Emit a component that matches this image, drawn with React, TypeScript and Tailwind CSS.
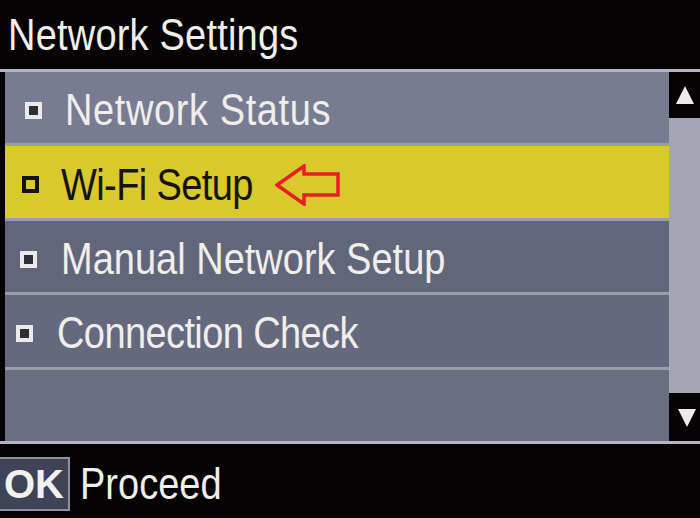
const ROWS: { label: string; bg: string; pad: string; gap: string; track: string; active?: boolean }[] = [
  { label: "Network Status", bg: "bg-[#787c92]", pad: "pl-[20px]", gap: "gap-[23px]", track: "tracking-[0.6px]" },
  { label: "Wi-Fi Setup", bg: "bg-[#d9ca2b]", pad: "pl-[17px]", gap: "gap-[22px]", track: "tracking-[-0.6px]", active: true },
  { label: "Manual Network Setup", bg: "bg-[#62667b]", pad: "pl-[15px]", gap: "gap-[24px]", track: "tracking-[0px]" },
  { label: "Connection Check", bg: "bg-[#65697e]", pad: "pl-[11px]", gap: "gap-[24px]", track: "tracking-[-0.6px]" },
  { label: "", bg: "bg-[#6a6e83]", pad: "pl-[11px]", gap: "gap-[24px]", track: "tracking-[0px]" },
];

function Bullet({ active }: { active?: boolean }) {
  return (
    <div
      className={
        active
          ? "h-[17px] w-[17px] shrink-0 border-[4px] border-[#141414] bg-[#d9ca2b]"
          : "h-[17px] w-[17px] shrink-0 border-[4px] border-[#ecebea] bg-[#2c2e38]"
      }
    />
  );
}

function RedArrow() {
  return (
    <svg width="66" height="42" viewBox="0 0 66 42" className="shrink-0">
      <polygon
        points="2,21 29,2 29,10 63,10 63,31 29,31 29,40"
        fill="none"
        stroke="#ea1c24"
        strokeWidth="3.5"
        strokeLinejoin="miter"
      />
    </svg>
  );
}

export default function App() {
  return (
    <div
      className="flex h-[518px] w-[700px] flex-col overflow-hidden bg-[#050304] text-[#efeeea]"
      style={{ fontFamily: '"Liberation Sans", Arial, sans-serif' }}
    >
      {/* Title */}
      <div className="flex h-[69px] shrink-0 items-center pl-[8px] text-[38px] leading-none">
        <span className="inline-block scale-y-[1.15] tracking-[0.2px]">Network Settings</span>
      </div>

      {/* List */}
      <div className="flex h-[375px] shrink-0 flex-col border-y-[3px] border-[#b3b5c2]">
        <div className="flex min-h-0 flex-1">
          <div className="flex flex-1 flex-col bg-[#050304] pl-[5px]">
            {ROWS.map((row, i) => (
              <div
                key={i}
                className={`flex flex-1 items-center pt-[5px] ${row.pad} ${row.gap} ${row.bg} ${
                  i < ROWS.length - 1 ? "border-b-[3px] border-[#9a9dac]" : ""
                } ${row.active ? "text-[#15130c]" : "text-[#efeeea]"} text-[38px] leading-none`}
              >
                {row.label && <Bullet active={row.active} />}
                {row.label && (
                  <span className={`inline-block scale-y-[1.15] ${row.track}`}>{row.label}</span>
                )}
                {row.active && <RedArrow />}
              </div>
            ))}
          </div>

          {/* Scrollbar */}
          <div className="flex w-[31px] shrink-0 flex-col">
            <div className="flex h-[46px] items-center justify-center bg-[#050304]">
              <svg width="20" height="20" viewBox="0 0 20 20">
                <polygon points="10,1 19,19 1,19" fill="#ecebe8" />
              </svg>
            </div>
            <div className="flex-1 bg-[#a4a6b4]" />
            <div className="flex h-[48px] items-center justify-center bg-[#050304] pl-[4px]">
              <svg width="20" height="20" viewBox="0 0 20 20">
                <polygon points="1,2 19,2 10,20" fill="#ecebe8" />
              </svg>
            </div>
          </div>
        </div>
      </div>

      {/* Footer */}
      <div className="flex flex-1 items-center gap-[10px] pt-[6px]">
        <div className="flex h-[54px] w-[70px] items-center justify-center border-[2px] border-l-0 border-[#8d91a2] bg-[#3e4357] text-[40px] font-bold leading-none text-[#f2f1ee]">
          OK
        </div>
        <span className="inline-block scale-y-[1.15] text-[38px] leading-none">Proceed</span>
      </div>
    </div>
  );
}
